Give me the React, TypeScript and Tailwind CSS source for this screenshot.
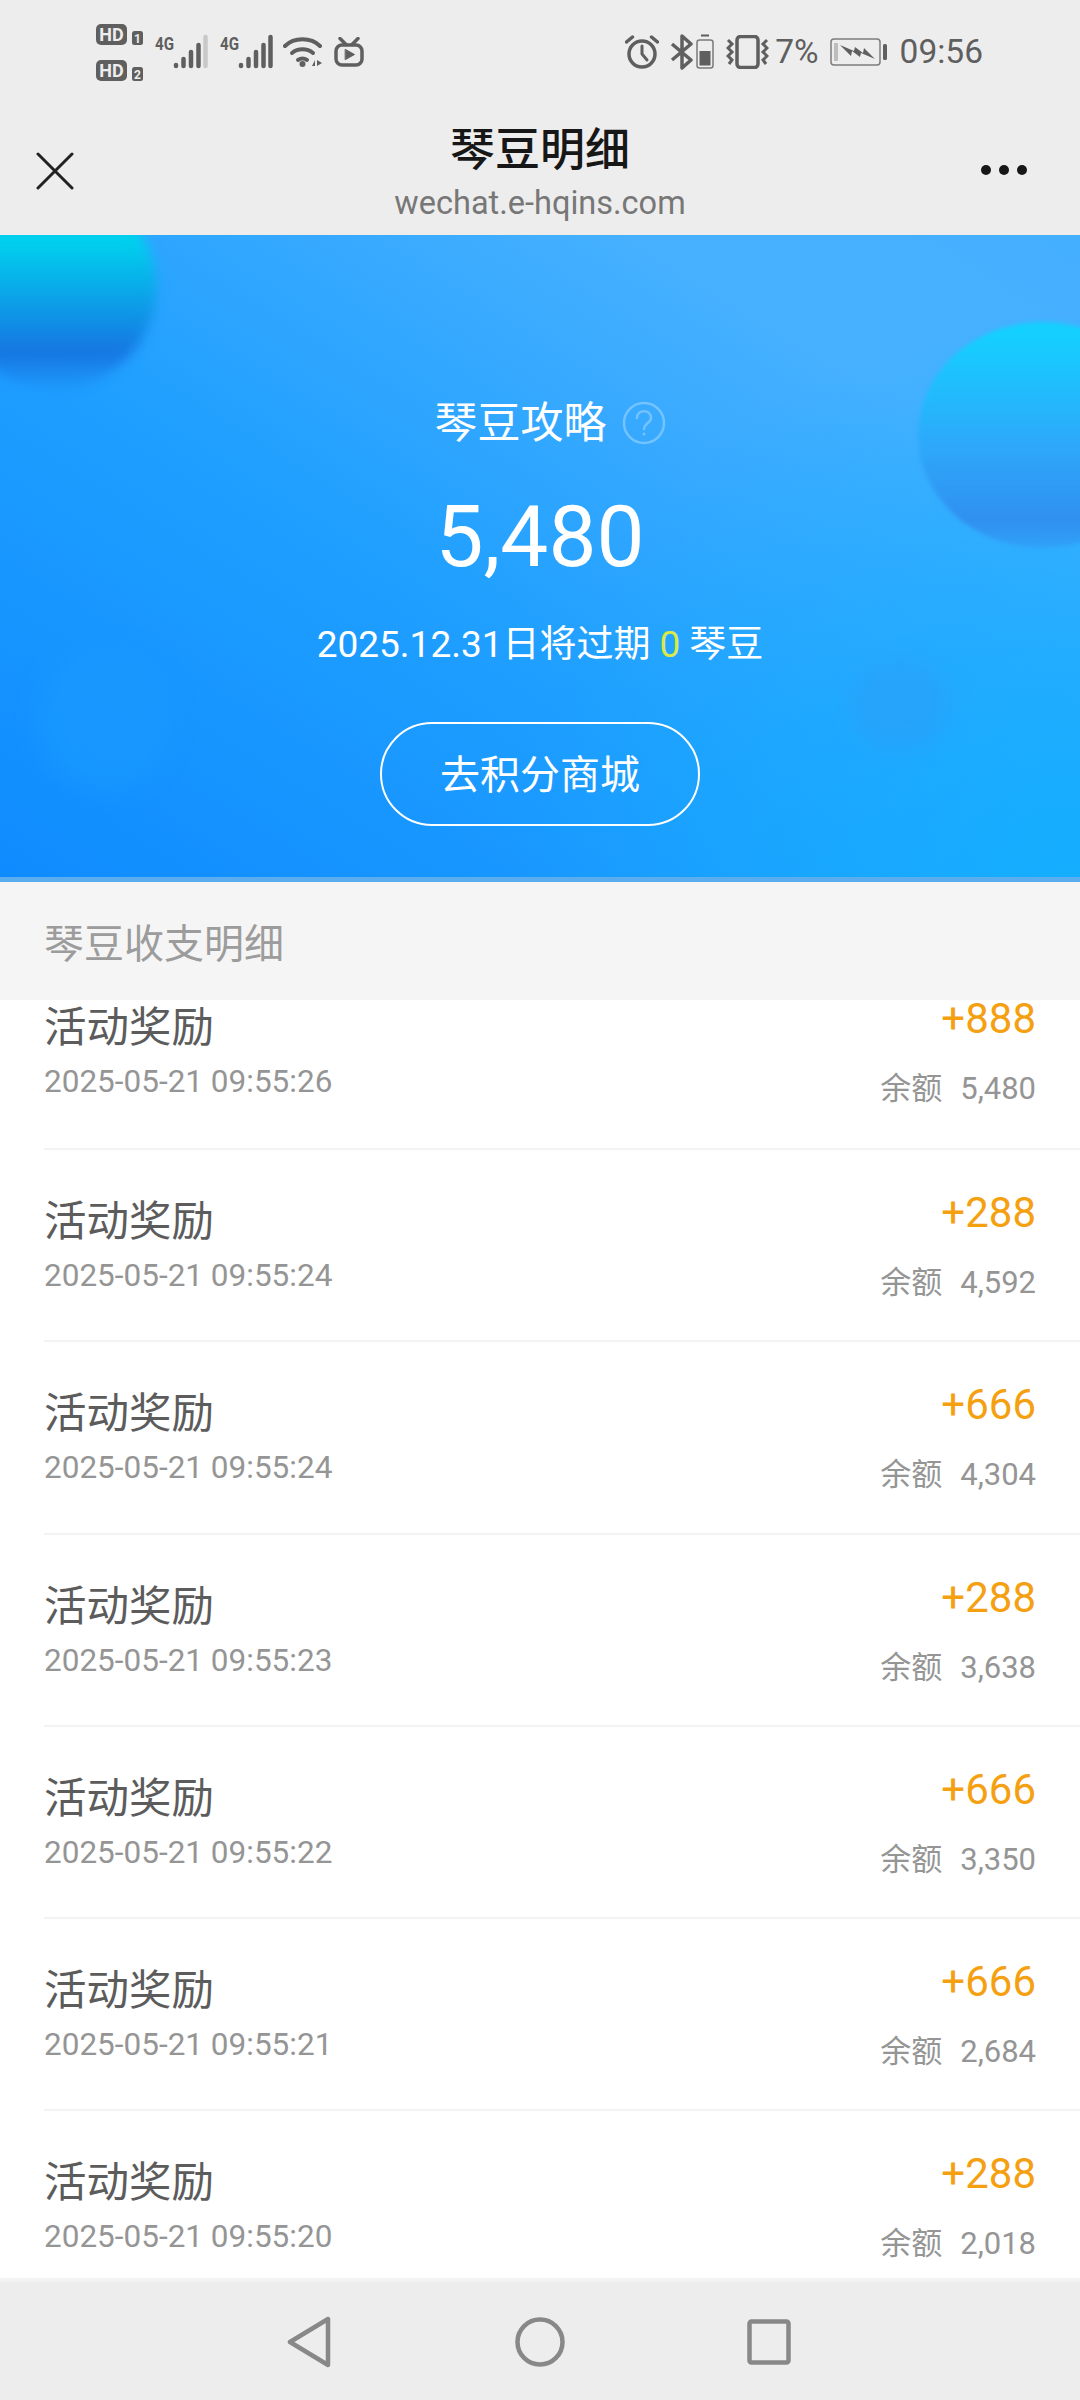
const FONT = 'font-["Roboto","Noto_Sans_CJK_SC",sans-serif]';

const rows = [
  { time: '2025-05-21 09:55:26', amount: '+888', balance: '5,480' },
  { time: '2025-05-21 09:55:24', amount: '+288', balance: '4,592' },
  { time: '2025-05-21 09:55:24', amount: '+666', balance: '4,304' },
  { time: '2025-05-21 09:55:23', amount: '+288', balance: '3,638' },
  { time: '2025-05-21 09:55:22', amount: '+666', balance: '3,350' },
  { time: '2025-05-21 09:55:21', amount: '+666', balance: '2,684' },
  { time: '2025-05-21 09:55:20', amount: '+288', balance: '2,018' },
];

function Sim({ n }: { n: string }) {
  return (
    <svg width="48" height="22" viewBox="0 0 48 22">
      <rect x="0" y="0" width="31" height="21" rx="5" fill="#5f5f5f" />
      <text x="15.5" y="17" textAnchor="middle" fontSize="18" fontWeight="700" fill="#ededed" fontFamily="Roboto">HD</text>
      <rect x="36" y="7" width="11" height="14" rx="2.5" fill="#5f5f5f" />
      <text x="41.5" y="18.5" textAnchor="middle" fontSize="12" fontWeight="700" fill="#ededed" fontFamily="Roboto">{n}</text>
    </svg>
  );
}

function Signal({ weak }: { weak?: boolean }) {
  return (
    <svg width="53" height="37" viewBox="0 -3 53 37">
      <text x="0" y="15" fontSize="19" fontWeight="700" fill="#5f5f5f" fontFamily="Roboto" textLength="19" lengthAdjust="spacingAndGlyphs">4G</text>
      <g stroke="#5f5f5f" strokeWidth="4.5" strokeLinecap="round">
        <path d="M21 30v1" />
        <path d="M28.500 24v7" />
        <path d="M36 17v14" />
        <path d="M43.500 10v21" />
        <path d="M50.500 2v29" stroke={weak ? '#c8c8c8' : '#5f5f5f'} />
      </g>
    </svg>
  );
}

function Wifi() {
  return (
    <svg width="40" height="34" viewBox="0 0 40 34" fill="none" stroke="#5f5f5f" strokeWidth="4" strokeLinecap="round">
      <path d="M2 11C11 2 28 2 37 11" />
      <path d="M9 18c6-5 15-5 21 0" />
      <path d="M15 25c3-2 6-2 9 0" />
      <circle cx="19.500" cy="29" r="3" fill="#5f5f5f" stroke="none" />
      <path d="M29 31l3-6v6zM34 25l5 3-5 3z" fill="#5f5f5f" stroke="none" />
    </svg>
  );
}

function Tv() {
  return (
    <svg width="30" height="30" viewBox="0 0 30 30" fill="none" stroke="#5f5f5f" strokeWidth="3.500" strokeLinecap="round">
      <rect x="2" y="8" width="26" height="20" rx="6" />
      <path d="M6 1.500l6 6M24 1.500l-6 6" />
      <path d="M11.500 12.500l9 5-9 5z" fill="#5f5f5f" strokeWidth="1" strokeLinejoin="round" />
    </svg>
  );
}

function Alarm() {
  return (
    <svg width="34" height="34" viewBox="0 0 34 34" fill="none" stroke="#5f5f5f" strokeWidth="3.500" strokeLinecap="round">
      <circle cx="17" cy="19" r="13" />
      <path d="M17 11v8l5 6" strokeWidth="3" />
      <path d="M1.500 7l6-5M32.500 7l-6-5" />
    </svg>
  );
}

function Bluetooth() {
  return (
    <svg width="23" height="36" viewBox="0 0 23 36" fill="none" stroke="#5f5f5f" strokeWidth="3.500">
      <path d="M2 10l19 16-9 8V2l9 8L2 26" strokeLinejoin="round" />
    </svg>
  );
}

function SmallBattery() {
  return (
    <svg width="18" height="36" viewBox="0 0 18 36" fill="none">
      <path d="M5 1.500h8" stroke="#5f5f5f" strokeWidth="2" />
      <rect x="1" y="6" width="16" height="28" rx="2.500" stroke="#7a7a7a" strokeWidth="1.500" />
      <rect x="3.500" y="17" width="11" height="14.500" fill="#5f5f5f" />
    </svg>
  );
}

function Vibrate() {
  return (
    <svg width="43" height="34" viewBox="0 0 43 34" fill="none" stroke="#5f5f5f">
      <rect x="11" y="1.500" width="21" height="31" rx="3.500" strokeWidth="3.500" />
      <path d="M2 5l4 4-4 4 4 4-4 4 4 4-3 4" strokeWidth="3" />
      <path d="M41 5l-4 4 4 4-4 4 4 4-4 4 3 4" strokeWidth="3" />
    </svg>
  );
}

function Battery() {
  return (
    <svg width="58" height="28" viewBox="0 0 58 28" fill="none">
      <rect x="1" y="1" width="49" height="26" rx="3" stroke="#7d7d7d" strokeWidth="1.500" />
      <rect x="4" y="5" width="4" height="18" fill="#bdbdbd" />
      <rect x="53" y="6" width="4" height="16" rx="1.500" fill="#5f5f5f" />
      <path d="M10 7l14 6 1-4 8 6 1-5 11 11-14-6-1 4-8-6-1 5z" fill="#5f5f5f" />
    </svg>
  );
}

function StatusBar() {
  return (
    <div className="flex h-[104px] items-start justify-between pl-[96px] pr-[97px] pt-[24px]">
      <div className="flex items-start">
        <div className="flex flex-col gap-[14px]">
          <Sim n="1" />
          <Sim n="2" />
        </div>
        <div className="ml-[11px] mt-[8px] flex gap-[12px]">
          <Signal weak />
          <Signal />
        </div>
        <div className="ml-[10px] mt-[11px]">
          <Wifi />
        </div>
        <div className="ml-[11px] mt-[13px]">
          <Tv />
        </div>
      </div>
      <div className="mt-[10px] flex h-[36px] items-center text-[#5f5f5f]">
        <Alarm />
        <div className="ml-[11px]">
          <Bluetooth />
        </div>
        <div className="ml-[3px]">
          <SmallBattery />
        </div>
        <div className="ml-[12px]">
          <Vibrate />
        </div>
        <span className="ml-[6px] text-[33.5px] leading-none">7%</span>
        <div className="ml-[11px]">
          <Battery />
        </div>
        <span className="ml-[12px] text-[33.5px] leading-none">09:56</span>
      </div>
    </div>
  );
}

function TopBar() {
  return (
    <div className="relative flex h-[131px] flex-col items-center pt-[17px]">
      <div className="absolute left-[36px] top-[48px]">
        <svg width="38" height="38" viewBox="0 0 38 38" fill="none" stroke="#222" strokeWidth="3" strokeLinecap="round">
          <path d="M2 2l34 34M36 2L2 36" />
        </svg>
      </div>
      <div className="text-[45px] font-medium leading-[60px] text-[#171717]">琴豆明细</div>
      <div className="mt-[4px] text-[32.5px] leading-[36px] text-[#777]">wechat.e-hqins.com</div>
      <div className="absolute left-[981px] top-[61px] flex gap-[8px]">
        <span className="h-[10px] w-[10px] rounded-full bg-[#171717]" />
        <span className="h-[10px] w-[10px] rounded-full bg-[#171717]" />
        <span className="h-[10px] w-[10px] rounded-full bg-[#171717]" />
      </div>
    </div>
  );
}

function Hero() {
  return (
    <div className="relative h-[647px] overflow-hidden border-b-[5px] border-[#5aaef0] bg-[radial-gradient(circle_at_100%_100%,#14aeff_0%,rgba(20,174,255,0)_45%),linear-gradient(32deg,#0f8bff_0%,#1f9fff_42%,#48b1ff_80%,#45afff_100%)] text-white">
      <div className="absolute -left-[48px] -top-[50px] h-[204px] w-[204px] rounded-[50%] bg-[linear-gradient(180deg,#00d0ee_28%,#1676e2_82%,rgba(26,134,234,0.2)_100%)] blur-[6px]" />
      <div className="absolute left-[918px] top-[87px] h-[226px] w-[250px] rounded-[50%] bg-[linear-gradient(180deg,#14d0ff_5%,#2ea8fa_55%,#3090f0_88%,rgba(48,144,240,0.4)_100%)] blur-[2px]" />
      <div className="absolute left-[40px] top-[415px] h-[140px] w-[130px] rounded-full bg-[#1a9cff] opacity-50 blur-[12px]" />
      <div className="absolute left-[850px] top-[425px] h-[90px] w-[100px] rounded-full bg-[#2ba0fa] opacity-60 blur-[10px]" />
      <div className="absolute inset-0 flex flex-col items-center">
        <div className="mt-[163px] flex h-[50px] items-center pl-[20px]">
          <span className="text-[43px] leading-[50px]">琴豆攻略</span>
          <svg className="ml-[15px]" width="44" height="44" viewBox="0 0 44 44" fill="none" stroke="#ffffff" strokeOpacity="0.3" strokeWidth="2.500">
            <circle cx="22" cy="22" r="20" />
            <path d="M15 17c0-9 14-9 14 0 0 5-7 5-7 11" strokeLinecap="round" />
            <circle cx="22" cy="33" r="1.500" fill="#ffffff" fillOpacity="0.3" stroke="none" />
          </svg>
        </div>
        <div className="mt-[46px] text-[85.5px] leading-[86px]">5,480</div>
        <div className="mt-[40px] flex items-center text-[37px] leading-[50px]">
          <span>2025.12.31日将过期</span>
          <span className="ml-[9px] text-[#d9e94a]">0</span>
          <span className="ml-[9px]">琴豆</span>
        </div>
        <button className="mt-[52px] flex h-[104px] w-[320px] items-center justify-center rounded-full border-2 border-white pt-[3px] text-[40px]">
          去积分商城
        </button>
      </div>
    </div>
  );
}

function Row({ time, amount, balance, first }: { time: string; amount: string; balance: string; first: boolean }) {
  return (
    <div className={`ml-[44px] flex h-[192.2px] items-start justify-between pr-[44px] ${first ? '' : 'border-t-2 border-[#f3f3f3]'}`}>
      <div className="pt-[47px]">
        <div className="text-[42.5px] leading-[50px] text-[#5c5c5c]">活动奖励</div>
        <div className="mt-[9px] text-[31.5px] leading-[40px] text-[#959595]">{time}</div>
      </div>
      <div className="flex flex-col items-end pt-[38px]">
        <div className="text-[42px] leading-[50px] text-[#f5a011]">{amount}</div>
        <div className="mt-[25px] flex items-center text-[#959595]">
          <span className="text-[31px] leading-[40px]">余额</span>
          <span className="ml-[18px] text-[31px] leading-[40px]">{balance}</span>
        </div>
      </div>
    </div>
  );
}

export default function App() {
  return (
    <div className={`flex h-[2400px] w-[1080px] flex-col overflow-hidden bg-white ${FONT}`}>
      <div className="bg-[#ededed]">
        <StatusBar />
        <TopBar />
      </div>
      <Hero />
      <div className="flex h-[118px] items-center bg-[#f5f5f5] pl-[44px] pt-[7px] text-[40px] text-[#9c9c9c]">琴豆收支明细</div>
      <div className="flex-1 overflow-hidden">
        <div className="-mt-[44px]">
          {rows.map((r, i) => (
            <Row key={r.time + r.amount} {...r} first={i === 0} />
          ))}
        </div>
      </div>
      <div className="flex h-[122px] items-center justify-center gap-[182px] border-t-4 border-[#f3f3f3] bg-[#ededed] pr-[3px] pt-[2px]">
        <svg width="46" height="52" viewBox="0 0 46 52" fill="none" stroke="#888" strokeWidth="4.500" strokeLinejoin="round">
          <path d="M41 3v46L3 26z" />
        </svg>
        <svg width="50" height="50" viewBox="0 0 50 50" fill="none" stroke="#888" strokeWidth="4.500">
          <circle cx="25" cy="25" r="22.500" />
        </svg>
        <svg width="44" height="46" viewBox="0 0 44 46" fill="none" stroke="#888" strokeWidth="4.500">
          <rect x="2.500" y="2.500" width="39" height="41" rx="2" />
        </svg>
      </div>
    </div>
  );
}
